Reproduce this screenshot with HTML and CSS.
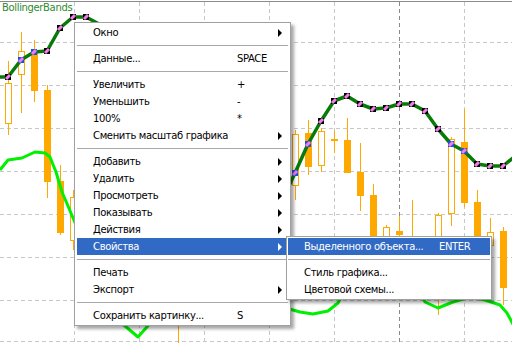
FILE: index.html
```html
<!DOCTYPE html>
<html lang="ru">

<head>
    <meta charset="UTF-8">
    <title>BollingerBands</title>
    <link rel="stylesheet" href="styles.css">
</head>

<body>
    <div class="chart">
        <svg class="plot" width="512" height="343" viewBox="0 0 512 343">
            <!-- grid -->
            <g class="grid">
                <line x1="0" y1="1.5" x2="512" y2="1.5" class="frame" />
                <line x1="0" y1="42.5" x2="512" y2="42.5" />
                <line x1="0" y1="85.5" x2="512" y2="85.5" />
                <line x1="0" y1="128.5" x2="512" y2="128.5" />
                <line x1="0" y1="171.5" x2="512" y2="171.5" />
                <line x1="0" y1="214.5" x2="512" y2="214.5" />
                <line x1="0" y1="257.5" x2="512" y2="257.5" />
                <line x1="0" y1="300.5" x2="512" y2="300.5" />
                <line x1="0" y1="341.5" x2="512" y2="341.5" />
                <line x1="74.5" y1="2" x2="74.5" y2="343" />
                <line x1="139.5" y1="2" x2="139.5" y2="343" />
                <line x1="204.5" y1="2" x2="204.5" y2="343" />
                <line x1="269.5" y1="2" x2="269.5" y2="343" />
                <line x1="334.5" y1="2" x2="334.5" y2="343" />
                <line x1="399.5" y1="2" x2="399.5" y2="343" class="sep" />
                <line x1="464.5" y1="2" x2="464.5" y2="343" />
            </g>

            <!-- candles -->
            <g class="wicks">
                <line x1="8.5" y1="61" x2="8.5" y2="135" />
                <line x1="21.5" y1="32" x2="21.5" y2="113" />
                <line x1="34.5" y1="40" x2="34.5" y2="102" />
                <line x1="47.5" y1="85" x2="47.5" y2="198" />
                <line x1="60.5" y1="165" x2="60.5" y2="235" />
                <line x1="73.5" y1="190" x2="73.5" y2="250" />
                <line x1="178.5" y1="280" x2="178.5" y2="343" />
                <line x1="295.5" y1="130" x2="295.5" y2="200" />
                <line x1="308.5" y1="120" x2="308.5" y2="175" />
                <line x1="321.5" y1="128" x2="321.5" y2="172" />
                <line x1="334.5" y1="131" x2="334.5" y2="153" />
                <line x1="347.5" y1="118" x2="347.5" y2="173" />
                <line x1="360.5" y1="143" x2="360.5" y2="211" />
                <line x1="373.5" y1="184" x2="373.5" y2="255" />
                <line x1="386.5" y1="225" x2="386.5" y2="255" />
                <line x1="399.5" y1="216" x2="399.5" y2="260" />
                <line x1="412.5" y1="200" x2="412.5" y2="260" />
                <line x1="438.5" y1="213" x2="438.5" y2="315" />
                <line x1="451.5" y1="137" x2="451.5" y2="226" />
                <line x1="464.5" y1="109" x2="464.5" y2="207" />
                <line x1="477.5" y1="190" x2="477.5" y2="260" />
                <line x1="490.5" y1="218" x2="490.5" y2="250" />
                <line x1="503.5" y1="227" x2="503.5" y2="305" />
            </g>
            <g class="bull">
                <rect x="5.5" y="83.5" width="6" height="40" />
                <rect x="18.5" y="51.5" width="6" height="23" />
                <rect x="70.5" y="197.5" width="6" height="43" />
                <rect x="292.5" y="134.5" width="6" height="51" />
                <rect x="318.5" y="131.5" width="6" height="34" />
                <rect x="383.5" y="227.5" width="6" height="23" />
                <rect x="435.5" y="215.5" width="6" height="83" />
                <rect x="448.5" y="139.5" width="6" height="74" />
                <rect x="487.5" y="232.5" width="6" height="13" />
            </g>
            <g class="bear">
                <rect x="31" y="50" width="7" height="41" />
                <rect x="44" y="90" width="7" height="92" />
                <rect x="57" y="181" width="7" height="52" />
                <rect x="175" y="290" width="7" height="30" />
                <rect x="305" y="133" width="7" height="34" />
                <rect x="331" y="139" width="7" height="2" />
                <rect x="344" y="140" width="7" height="33" />
                <rect x="357" y="172" width="7" height="24" />
                <rect x="370" y="195" width="7" height="55" />
                <rect x="396" y="231" width="7" height="4" />
                <rect x="409" y="240" width="7" height="10" />
                <rect x="461" y="142" width="7" height="61" />
                <rect x="474" y="202" width="7" height="48" />
                <rect x="500" y="231" width="7" height="57" />
            </g>

            <!-- lower band -->
            <g class="band">
                <polyline points="0,170 8,160 22,158 35,152 45,153 50,157 56,172 62,192 68,206 76,225" />
                <polyline points="112,316 125,326 138,337 146,328 156,316" />
                <polyline points="286,308 300,312 313,314 328,311 338,303 345,290" />
                <polyline points="418,290 425,302 438,308 453,302 470,297 485,300 500,305 507,313 514,326" />
            </g>

            <!-- middle line -->
            <polyline class="mid" points="0,77 8,77 21,60 34,52 47,51 60,28 73,17 86,17 99,24 120,60 280,205 295,173 308,144 321,121 334,101 347,96 360,104 373,109 386,108 399,104 412,104 425,111 438,129 451,144 464,151 477,164 490,166 503,166 514,157" />

            <g class="dots">
                <g transform="translate(8 77)"><rect x="-3" y="-3" width="6" height="6" /><line x1="-2" y1="2" x2="2" y2="-2" /></g>
                <g transform="translate(21 60)" class="blue"><rect x="-3" y="-3" width="6" height="6" /><line x1="-2" y1="2" x2="2" y2="-2" /></g>
                <g transform="translate(34 52)" class="blue"><rect x="-3" y="-3" width="6" height="6" /><line x1="-2" y1="2" x2="2" y2="-2" /></g>
                <g transform="translate(47 51)"><rect x="-3" y="-3" width="6" height="6" /><line x1="-2" y1="2" x2="2" y2="-2" /></g>
                <g transform="translate(60 28)"><rect x="-3" y="-3" width="6" height="6" /><line x1="-2" y1="2" x2="2" y2="-2" /></g>
                <g transform="translate(73 17)"><rect x="-3" y="-3" width="6" height="6" /><line x1="-2" y1="2" x2="2" y2="-2" /></g>
                <g transform="translate(86 17)"><rect x="-3" y="-3" width="6" height="6" /><line x1="-2" y1="2" x2="2" y2="-2" /></g>
                <g transform="translate(295 173)" class="blue"><rect x="-3" y="-3" width="6" height="6" /><line x1="-2" y1="2" x2="2" y2="-2" /></g>
                <g transform="translate(308 144)" class="blue"><rect x="-3" y="-3" width="6" height="6" /><line x1="-2" y1="2" x2="2" y2="-2" /></g>
                <g transform="translate(321 121)"><rect x="-3" y="-3" width="6" height="6" /><line x1="-2" y1="2" x2="2" y2="-2" /></g>
                <g transform="translate(334 101)"><rect x="-3" y="-3" width="6" height="6" /><line x1="-2" y1="2" x2="2" y2="-2" /></g>
                <g transform="translate(347 96)"><rect x="-3" y="-3" width="6" height="6" /><line x1="-2" y1="2" x2="2" y2="-2" /></g>
                <g transform="translate(360 104)"><rect x="-3" y="-3" width="6" height="6" /><line x1="-2" y1="2" x2="2" y2="-2" /></g>
                <g transform="translate(373 109)"><rect x="-3" y="-3" width="6" height="6" /><line x1="-2" y1="2" x2="2" y2="-2" /></g>
                <g transform="translate(386 108)"><rect x="-3" y="-3" width="6" height="6" /><line x1="-2" y1="2" x2="2" y2="-2" /></g>
                <g transform="translate(399 104)"><rect x="-3" y="-3" width="6" height="6" /><line x1="-2" y1="2" x2="2" y2="-2" /></g>
                <g transform="translate(412 104)"><rect x="-3" y="-3" width="6" height="6" /><line x1="-2" y1="2" x2="2" y2="-2" /></g>
                <g transform="translate(425 111)"><rect x="-3" y="-3" width="6" height="6" /><line x1="-2" y1="2" x2="2" y2="-2" /></g>
                <g transform="translate(438 129)"><rect x="-3" y="-3" width="6" height="6" /><line x1="-2" y1="2" x2="2" y2="-2" /></g>
                <g transform="translate(451 144)" class="blue"><rect x="-3" y="-3" width="6" height="6" /><line x1="-2" y1="2" x2="2" y2="-2" /></g>
                <g transform="translate(464 151)" class="blue"><rect x="-3" y="-3" width="6" height="6" /><line x1="-2" y1="2" x2="2" y2="-2" /></g>
                <g transform="translate(477 164)"><rect x="-3" y="-3" width="6" height="6" /><line x1="-2" y1="2" x2="2" y2="-2" /></g>
                <g transform="translate(490 166)"><rect x="-3" y="-3" width="6" height="6" /><line x1="-2" y1="2" x2="2" y2="-2" /></g>
                <g transform="translate(503 166)"><rect x="-3" y="-3" width="6" height="6" /><line x1="-2" y1="2" x2="2" y2="-2" /></g>
            </g>
        </svg>

        <div class="label">BollingerBands</div>

        <div class="menu main_menu">
            <div class="item"><span class="text">Окно</span><span class="arrow"></span></div>
            <div class="separator"></div>
            <div class="item"><span class="text">Данные...</span><span class="key">SPACE</span></div>
            <div class="separator"></div>
            <div class="item"><span class="text">Увеличить</span><span class="key">+</span></div>
            <div class="item"><span class="text">Уменьшить</span><span class="key">-</span></div>
            <div class="item"><span class="text">100%</span><span class="key">*</span></div>
            <div class="item"><span class="text">Сменить масштаб графика</span><span class="arrow"></span></div>
            <div class="separator"></div>
            <div class="item"><span class="text">Добавить</span><span class="arrow"></span></div>
            <div class="item"><span class="text">Удалить</span><span class="arrow"></span></div>
            <div class="item"><span class="text">Просмотреть</span><span class="arrow"></span></div>
            <div class="item"><span class="text">Показывать</span><span class="arrow"></span></div>
            <div class="item"><span class="text">Действия</span><span class="arrow"></span></div>
            <div class="item active"><span class="text">Свойства</span><span class="arrow"></span></div>
            <div class="separator"></div>
            <div class="item"><span class="text">Печать</span></div>
            <div class="item"><span class="text">Экспорт</span><span class="arrow"></span></div>
            <div class="separator"></div>
            <div class="item"><span class="text">Сохранить картинку...</span><span class="key">S</span></div>
        </div>

        <div class="menu sub_menu">
            <div class="item active"><span class="text">Выделенного объекта...</span><span class="key">ENTER</span></div>
            <div class="separator"></div>
            <div class="item"><span class="text">Стиль графика...</span></div>
            <div class="item"><span class="text">Цветовой схемы...</span></div>
        </div>
    </div>
</body>

</html>
```

FILE: styles.css
```css
body {
    margin: 0;
    background-color: #ffffff;
    font-family: "DejaVu Sans", "Liberation Sans", sans-serif;
}

.chart {
    position: relative;
    width: 512px;
    height: 343px;
    overflow: hidden;
}

.plot {
    display: block;
}

.grid line {
    stroke: #c8c8c8;
    stroke-width: 1;
    stroke-dasharray: 4 3;
}

.grid .frame {
    stroke: #8a8a8a;
    stroke-dasharray: none;
}

.grid .sep {
    stroke: #8a8a8a;
}

.wicks line {
    stroke: #ffa800;
    stroke-width: 1;
}

.bull rect {
    fill: #ffffff;
    stroke: #ffa800;
    stroke-width: 1;
}

.bear rect {
    fill: #ffa800;
}

.band polyline {
    fill: none;
    stroke: #00f000;
    stroke-width: 3;
    stroke-linejoin: round;
}

.mid {
    fill: none;
    stroke: #087a08;
    stroke-width: 3.5;
    stroke-linejoin: round;
}

.dots rect {
    fill: #000000;
}

.dots .blue rect {
    fill: #1f4fe0;
}

.dots line {
    stroke: #f080e8;
    stroke-width: 3;
}

.label {
    position: absolute;
    left: 2px;
    top: 2px;
    font-size: 10px;
    letter-spacing: -0.35px;
    color: #2e8b2e;
}

.menu {
    position: absolute;
    box-sizing: border-box;
    background: #ffffff;
    border: 1px solid #a0a0a0;
    box-shadow: 3px 3px 3px rgba(0, 0, 0, 0.35);
    font-size: 10px;
    letter-spacing: -0.35px;
    color: #000000;
}

.main_menu {
    left: 74px;
    top: 22px;
    width: 217px;
    padding: 1px 2px;
}

.sub_menu {
    left: 286px;
    top: 236px;
    width: 206px;
    padding: 1px;
}

.item {
    display: flex;
    align-items: center;
    height: 17px;
    padding-left: 16px;
    padding-right: 6px;
    white-space: nowrap;
}

.main_menu .text {
    width: 144px;
}

.sub_menu .text {
    width: 135px;
}

.arrow {
    margin-left: auto;
    width: 0;
    height: 0;
    border-left: 4px solid #000000;
    border-top: 4px solid transparent;
    border-bottom: 4px solid transparent;
}

.item.active {
    background: #316ac5;
    color: #ffffff;
}

.item.active .arrow {
    border-left-color: #ffffff;
}

.separator {
    height: 1px;
    margin: 4px 0;
    background: #a8a8a8;
}
```
